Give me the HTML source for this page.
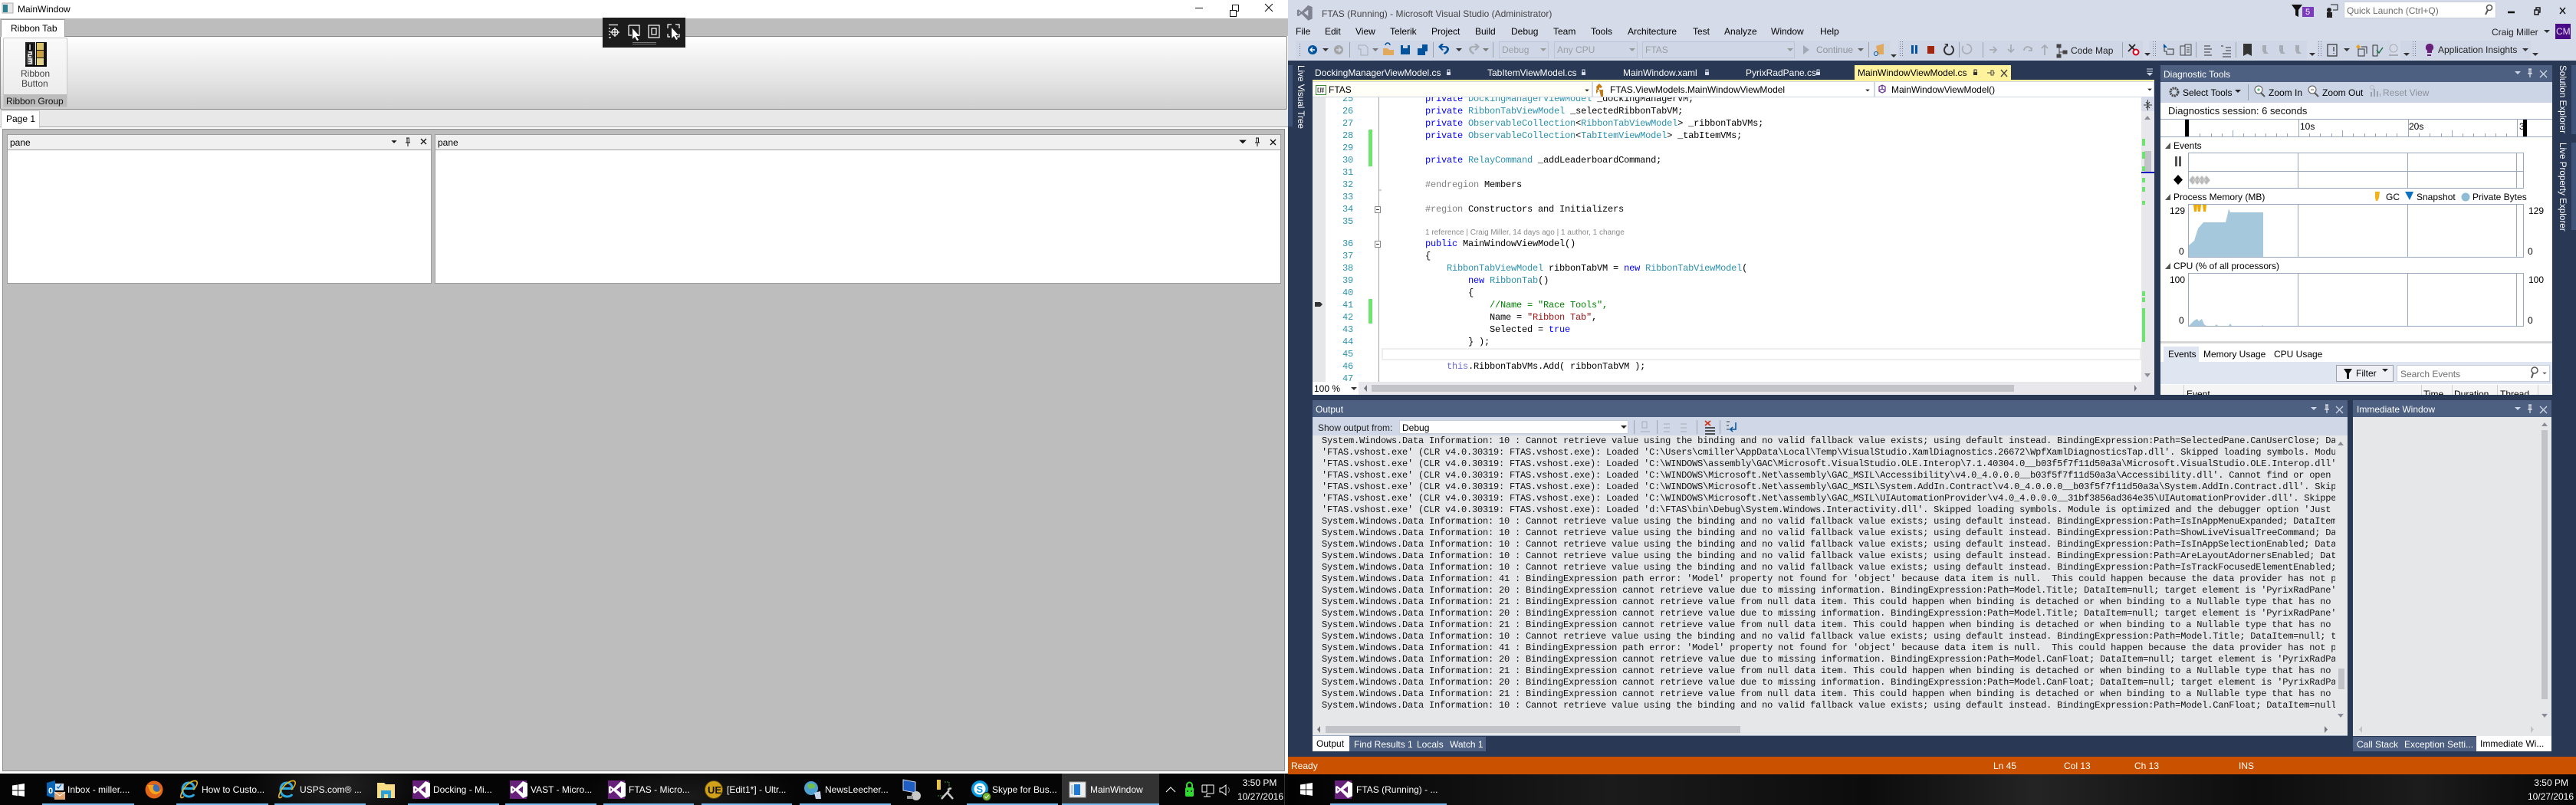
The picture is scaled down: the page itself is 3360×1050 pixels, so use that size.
<!DOCTYPE html>
<html><head><meta charset="utf-8"><title>MainWindow</title>
<style>
html,body{margin:0;padding:0;width:3360px;height:1050px;overflow:hidden;background:#000}
body{position:relative;font:12px/16px "Liberation Sans",sans-serif;color:#000}
.r{position:absolute}
.t{position:absolute;white-space:nowrap;line-height:16px;font-size:12px}
.w{color:#fff}.g{color:#a2a4a5}
.c{position:absolute;white-space:pre;font:12px/16px "Liberation Mono",monospace;letter-spacing:-.2px;left:0}
.n{position:absolute;left:1740px;width:25px;text-align:right;font:12px/16px "Liberation Mono",monospace;letter-spacing:-.2px;color:#2b91af}
.k{color:#00f}.y{color:#2b91af}.p{color:#808080}.s{color:#a31515}.m{color:#008000}.h{color:#6c6cd8}
.o{display:block;white-space:pre;font:12px/15px "Liberation Mono",monospace;letter-spacing:-.2px;height:15px;color:#111}
.u{position:absolute;top:1048px;height:2px;background:#76b9ed}
</style></head><body>

<!-- LEFT WINDOW -->
<div class="r" style="left:0;top:0;width:1680px;height:1009px;background:#fff"></div>
<div class="t" style="left:23px;top:4px">MainWindow</div>
<div class="r" style="left:0;top:24px;width:1680px;height:23px;background:#bdbdbd"></div>
<div class="r" style="left:0;top:47px;width:1679px;height:96px;background:linear-gradient(#fff,#f3f3f3 25%,#e2e2e2 65%,#cfcfcf);border:1px solid #8a8a8a;box-sizing:border-box;border-radius:2px"></div>
<div class="r" style="left:1px;top:25px;width:84px;height:23px;background:#fff;border:1px solid #9a9a9a;border-bottom:0;box-sizing:border-box"></div>
<div class="t" style="left:14px;top:29px">Ribbon Tab</div>
<div class="r" style="left:4px;top:49px;width:84px;height:91px;background:linear-gradient(#fafafa,#e9e9e9);border:1px solid #c8c8c8;box-sizing:border-box;border-radius:2px"></div>
<div class="r" style="left:5px;top:123px;width:82px;height:16px;background:#bcbcbc"></div>
<div class="t" style="left:27px;top:88px;color:#444">Ribbon</div>
<div class="t" style="left:28px;top:101px;color:#444">Button</div>
<div class="t" style="left:8px;top:124px;color:#111">Ribbon Group</div>
<div class="r" style="left:0;top:143px;width:1680px;height:23px;background:#e8e8e8;border-bottom:1px solid #a8a8a8;box-sizing:border-box"></div>
<div class="r" style="left:1px;top:144px;width:51px;height:23px;background:#fff;border:1px solid #c8c8c8;border-bottom:0;box-sizing:border-box"></div>
<div class="t" style="left:8px;top:147px">Page 1</div>
<div class="r" style="left:3px;top:168px;width:1673px;height:838px;background:#bdbdbd;border:1px solid #8c8c8c;border-width:1px 1px 1px 1px;box-sizing:border-box"></div>
<div class="r" style="left:9px;top:175px;width:554px;height:195px;background:#fff;border:1px solid #9b9b9b;box-sizing:border-box"></div>
<div class="r" style="left:10px;top:176px;width:552px;height:19px;background:#f0f0f0;border-bottom:1px solid #a4a4a4"></div>
<div class="t" style="left:13px;top:178px">pane</div>
<div class="r" style="left:567px;top:175px;width:1104px;height:195px;background:#fff;border:1px solid #9b9b9b;box-sizing:border-box"></div>
<div class="r" style="left:568px;top:176px;width:1102px;height:19px;background:#f0f0f0;border-bottom:1px solid #a4a4a4"></div>
<div class="t" style="left:571px;top:178px">pane</div>
<div class="r" style="left:786px;top:23px;width:108px;height:39px;background:#1c1c1c"></div>

<!-- VS WINDOW -->
<div class="r" style="left:1680px;top:0;width:1680px;height:987px;background:#293955"></div>
<div class="r" style="left:1680px;top:0;width:1680px;height:79px;background:#d6dbe9"></div>
<div class="t" style="left:1724px;top:10px;color:#444">FTAS (Running) - Microsoft Visual Studio (Administrator)</div>
<div class="t" style="left:1690px;top:33px">File</div><div class="t" style="left:1728px;top:33px">Edit</div><div class="t" style="left:1768px;top:33px">View</div><div class="t" style="left:1813px;top:33px">Telerik</div><div class="t" style="left:1867px;top:33px">Project</div><div class="t" style="left:1924px;top:33px">Build</div><div class="t" style="left:1971px;top:33px">Debug</div><div class="t" style="left:2026px;top:33px">Team</div><div class="t" style="left:2075px;top:33px">Tools</div><div class="t" style="left:2123px;top:33px">Architecture</div><div class="t" style="left:2208px;top:33px">Test</div><div class="t" style="left:2249px;top:33px">Analyze</div><div class="t" style="left:2310px;top:33px">Window</div><div class="t" style="left:2374px;top:33px">Help</div>

<div class="r" style="left:1690px;top:53px;width:775px;height:24px;background:#cfd6e5"></div>
<div class="r" style="left:2476px;top:53px;width:319px;height:24px;background:#cfd6e5"></div>
<div class="r" style="left:2803px;top:53px;width:206px;height:24px;background:#cfd6e5"></div>
<div class="r" style="left:3022px;top:53px;width:97px;height:24px;background:#cfd6e5"></div>
<div class="r" style="left:3131px;top:53px;width:170px;height:24px;background:#cfd6e5"></div>
<div class="r" style="left:1955px;top:54px;width:65px;height:22px;border:1px solid #bcc5d6;box-sizing:border-box"></div>
<div class="t g" style="left:1959px;top:57px;color:#9a9ea6">Debug</div>
<div class="r" style="left:2027px;top:54px;width:109px;height:22px;border:1px solid #bcc5d6;box-sizing:border-box"></div>
<div class="t g" style="left:2031px;top:57px;color:#9a9ea6">Any CPU</div>
<div class="r" style="left:2142px;top:54px;width:199px;height:22px;border:1px solid #bcc5d6;box-sizing:border-box"></div>
<div class="t g" style="left:2146px;top:57px;color:#9a9ea6">FTAS</div>
<div class="t g" style="left:2369px;top:57px;color:#8f939b">Continue</div>
<div class="t" style="left:2701px;top:58px;color:#222">Code Map</div>
<div class="t" style="left:3180px;top:57px;color:#222">Application Insights</div>

<div class="r" style="left:3003px;top:9px;width:15px;height:13px;background:#7b3bbd"></div>
<div class="t w" style="left:3007px;top:8px;font-size:11px">5</div>
<div class="r" style="left:3057px;top:2px;width:199px;height:22px;background:#fff;border:1px solid #c6cede;box-sizing:border-box"></div>
<div class="t" style="left:3061px;top:6px;color:#6d6d6d">Quick Launch (Ctrl+Q)</div>
<div class="t" style="left:3250px;top:34px;color:#222">Craig Miller</div>
<div class="r" style="left:3333px;top:31px;width:20px;height:20px;background:#4a0c86"></div>
<div class="t" style="left:3334px;top:33px;color:#e8dcf5;font-size:12px">CM</div>

<!-- left strip -->
<div class="r" style="left:1680px;top:85px;width:6px;height:80px;background:#3f5378"></div>
<div class="t w" style="left:1688px;top:85px;writing-mode:vertical-rl;font-size:11.7px">Live Visual Tree</div>

<!-- Document tabs -->
<div class="t w" style="left:1715px;top:87px">DockingManagerViewModel.cs</div>
<div class="t w" style="left:1940px;top:87px">TabItemViewModel.cs</div>
<div class="t w" style="left:2117px;top:87px">MainWindow.xaml</div>
<div class="t w" style="left:2277px;top:87px">PyrixRadPane.cs</div>
<div class="r" style="left:2419px;top:85px;width:204px;height:19px;background:#fff29d"></div>
<div class="t" style="left:2423px;top:87px">MainWindowViewModel.cs</div>
<div class="r" style="left:1712px;top:104px;width:1098px;height:2px;background:#fff29d"></div>

<!-- nav bar -->
<div class="r" style="left:1712px;top:106px;width:1098px;height:21px;background:#cfd6e5"></div>
<div class="r" style="left:1712px;top:107px;width:364px;height:19px;background:#fffff8"></div>
<div class="r" style="left:2078px;top:107px;width:366px;height:19px;background:#fff"></div>
<div class="r" style="left:2446px;top:107px;width:363px;height:19px;background:#fff"></div>
<div class="t" style="left:1733px;top:109px">FTAS</div>
<div class="t" style="left:2100px;top:109px">FTAS.ViewModels.MainWindowViewModel</div>
<div class="t" style="left:2467px;top:109px">MainWindowViewModel()</div>

<!-- editor -->
<div class="r" style="left:1712px;top:127px;width:1098px;height:371px;background:#fff"></div>
<div class="r" style="left:1712px;top:127px;width:17px;height:371px;background:#e6e7e8"></div>
<div class="r" style="left:1798px;top:127px;width:1px;height:371px;background:#a5a5a5"></div>
<div class="r" style="left:1785px;top:169px;width:5px;height:48px;background:#6fe36f"></div>
<div class="r" style="left:1785px;top:390px;width:5px;height:32px;background:#6fe36f"></div>
<div class="r" style="left:1802px;top:454px;width:991px;height:16px;background:#fff;border:2px solid #eeeeee;box-sizing:border-box"></div>

<div class="r" style="left:1740px;top:127px;width:30px;height:10px;overflow:hidden"><div class="n" style="left:0;top:-6px">25</div></div>
<div class="n" style="top:137px">26</div><div class="n" style="top:153px">27</div><div class="n" style="top:169px">28</div><div class="n" style="top:185px">29</div><div class="n" style="top:201px">30</div><div class="n" style="top:217px">31</div><div class="n" style="top:233px">32</div><div class="n" style="top:249px">33</div><div class="n" style="top:265px">34</div><div class="n" style="top:281px">35</div><div class="n" style="top:310px">36</div><div class="n" style="top:326px">37</div><div class="n" style="top:342px">38</div><div class="n" style="top:358px">39</div><div class="n" style="top:374px">40</div><div class="n" style="top:390px">41</div><div class="n" style="top:406px">42</div><div class="n" style="top:422px">43</div><div class="n" style="top:438px">44</div><div class="n" style="top:454px">45</div><div class="n" style="top:470px">46</div><div class="n" style="top:486px;height:12px;overflow:hidden">47</div>

<div class="r" style="left:1859px;top:127px;width:930px;height:371px;overflow:hidden">
<div class="c" style="top:-6px"><span class="k">private</span> <span class="y">DockingManagerViewModel</span> _dockingManagerVM;</div>
<div class="c" style="top:10px"><span class="k">private</span> <span class="y">RibbonTabViewModel</span> _selectedRibbonTabVM;</div>
<div class="c" style="top:26px"><span class="k">private</span> <span class="y">ObservableCollection</span>&lt;<span class="y">RibbonTabViewModel</span>&gt; _ribbonTabVMs;</div>
<div class="c" style="top:42px"><span class="k">private</span> <span class="y">ObservableCollection</span>&lt;<span class="y">TabItemViewModel</span>&gt; _tabItemVMs;</div>
<div class="c" style="top:74px"><span class="k">private</span> <span class="y">RelayCommand</span> _addLeaderboardCommand;</div>
<div class="c" style="top:106px"><span class="p">#endregion</span> Members</div>
<div class="c" style="top:138px"><span class="p">#region</span> Constructors and Initializers</div>
<div class="c" style="top:183px"><span class="k">public</span> MainWindowViewModel()</div>
<div class="c" style="top:199px">{</div>
<div class="c" style="top:215px">    <span class="y">RibbonTabViewModel</span> ribbonTabVM = <span class="k">new</span> <span class="y">RibbonTabViewModel</span>(</div>
<div class="c" style="top:231px">        <span class="k">new</span> <span class="y">RibbonTab</span>()</div>
<div class="c" style="top:247px">        {</div>
<div class="c" style="top:263px">            <span class="m">//Name = "Race Tools",</span></div>
<div class="c" style="top:279px">            Name = <span class="s">"Ribbon Tab"</span>,</div>
<div class="c" style="top:295px">            Selected = <span class="k">true</span></div>
<div class="c" style="top:311px">        } );</div>
<div class="c" style="top:343px">    <span class="h">this</span>.RibbonTabVMs.Add( ribbonTabVM );</div>
</div>
<div class="t" style="left:1859px;top:296px;font-size:10px;color:#8a8a8a">1 reference | Craig Miller, 14 days ago | 1 author, 1 change</div>

<!-- editor scrollbars -->
<div class="r" style="left:2793px;top:127px;width:17px;height:371px;background:#e8e8ec"></div>
<div class="r" style="left:2793px;top:127px;width:17px;height:18px;background:#d6dbe9"></div>
<div class="r" style="left:2797px;top:197px;width:9px;height:28px;background:#c2c3c9"></div>
<div class="r" style="left:2794px;top:181px;width:4px;height:9px;background:#6fe36f"></div>
<div class="r" style="left:2794px;top:198px;width:4px;height:9px;background:#6fe36f"></div>
<div class="r" style="left:2794px;top:217px;width:4px;height:6px;background:#6fe36f"></div>
<div class="r" style="left:2794px;top:232px;width:4px;height:6px;background:#6fe36f"></div>
<div class="r" style="left:2794px;top:244px;width:4px;height:6px;background:#6fe36f"></div>
<div class="r" style="left:2794px;top:262px;width:4px;height:5px;background:#6fe36f"></div>
<div class="r" style="left:2794px;top:380px;width:4px;height:6px;background:#6fe36f"></div>
<div class="r" style="left:2794px;top:388px;width:4px;height:6px;background:#6fe36f"></div>
<div class="r" style="left:2794px;top:402px;width:4px;height:44px;background:#6fe36f"></div>
<div class="r" style="left:2793px;top:224px;width:17px;height:2px;background:#0000c0"></div>
<div class="r" style="left:1712px;top:498px;width:1098px;height:17px;background:#e8e8ec"></div>
<div class="r" style="left:1712px;top:498px;width:60px;height:17px;background:#fff"></div>
<div class="t" style="left:1714px;top:499px">100 %</div>
<div class="r" style="left:1789px;top:502px;width:838px;height:9px;background:#c2c3c9"></div>

<!-- Diagnostic tools -->
<div class="r" style="left:2818px;top:85px;width:511px;height:430px;background:#fff"></div>
<div class="r" style="left:2818px;top:85px;width:511px;height:22px;background:#4d6082"></div>
<div class="t w" style="left:2822px;top:89px">Diagnostic Tools</div>
<div class="r" style="left:2818px;top:107px;width:511px;height:27px;background:#ccd5e5"></div>
<div class="t" style="left:2847px;top:113px">Select Tools</div>
<div class="t" style="left:2959px;top:113px">Zoom In</div>
<div class="t" style="left:3029px;top:113px">Zoom Out</div>
<div class="t" style="left:3108px;top:113px;color:#8d929c">Reset View</div>
<div class="t" style="left:2828px;top:137px;font-size:13px;color:#111">Diagnostics session: 6 seconds</div>
<div class="r" style="left:2818px;top:155px;width:511px;height:1px;background:#9aa8bd"></div>
<div class="r" style="left:2818px;top:178px;width:511px;height:1px;background:#9aa8bd"></div>
<div class="t" style="left:3000px;top:157px">10s</div>
<div class="t" style="left:3142px;top:157px">20s</div>
<div class="t" style="left:3286px;top:157px">3</div>
<div class="r" style="left:2850px;top:156px;width:5px;height:22px;background:#000"></div>
<div class="r" style="left:3291px;top:156px;width:5px;height:22px;background:#000"></div>
<div class="t" style="left:2835px;top:182px">Events</div>
<div class="r" style="left:2854px;top:199px;width:438px;height:47px;border:1px solid #9aa8bd;box-sizing:border-box"></div>
<div class="r" style="left:2854px;top:223px;width:438px;height:1px;background:#9aa8bd"></div>
<div class="t" style="left:2835px;top:249px">Process Memory (MB)</div>
<div class="t" style="left:3112px;top:249px">GC</div>
<div class="t" style="left:3152px;top:249px">Snapshot</div>
<div class="t" style="left:3225px;top:249px">Private Bytes</div>
<div class="r" style="left:2854px;top:266px;width:438px;height:70px;border:1px solid #9aa8bd;box-sizing:border-box"></div>
<div class="t" style="left:2830px;top:267px">129</div><div class="t" style="left:2842px;top:320px">0</div>
<div class="t" style="left:3298px;top:267px">129</div><div class="t" style="left:3297px;top:320px">0</div>
<div class="t" style="left:2835px;top:339px">CPU (% of all processors)</div>
<div class="r" style="left:2854px;top:356px;width:438px;height:70px;border:1px solid #9aa8bd;box-sizing:border-box"></div>
<div class="t" style="left:2830px;top:357px">100</div><div class="t" style="left:2842px;top:410px">0</div>
<div class="t" style="left:3298px;top:357px">100</div><div class="t" style="left:3297px;top:410px">0</div>
<div class="r" style="left:2818px;top:445px;width:511px;height:3px;background:#d6d6d6"></div>
<div class="r" style="left:2822px;top:452px;width:46px;height:20px;background:#e0e5f2"></div>
<div class="t" style="left:2828px;top:454px">Events</div>
<div class="t" style="left:2874px;top:454px">Memory Usage</div>
<div class="t" style="left:2966px;top:454px">CPU Usage</div>
<div class="r" style="left:2818px;top:472px;width:511px;height:29px;background:#e0e5f2"></div>
<div class="r" style="left:3047px;top:476px;width:75px;height:22px;background:#eef0f6;border:1px solid #9a9fa8;box-sizing:border-box"></div>
<div class="t" style="left:3073px;top:479px">Filter</div>
<div class="r" style="left:3126px;top:476px;width:200px;height:22px;background:#fff;border:1px solid #c6cede;box-sizing:border-box"></div>
<div class="t" style="left:3131px;top:480px;color:#6d6d6d">Search Events</div>
<div class="r" style="left:2818px;top:502px;width:511px;height:13px;background:#f5f5f5;overflow:hidden">
<div class="t" style="left:34px;top:4px">Event</div><div class="t" style="left:343px;top:4px">Time</div><div class="t" style="left:383px;top:4px">Duration</div><div class="t" style="left:443px;top:4px">Thread</div>
<div class="r" style="left:30px;top:0;width:1px;height:13px;background:#d0d0d0"></div><div class="r" style="left:340px;top:0;width:1px;height:13px;background:#d0d0d0"></div><div class="r" style="left:380px;top:0;width:1px;height:13px;background:#d0d0d0"></div><div class="r" style="left:439px;top:0;width:1px;height:13px;background:#d0d0d0"></div><div class="r" style="left:492px;top:0;width:1px;height:13px;background:#d0d0d0"></div>
</div>

<!-- right strip -->
<div class="r" style="left:3354px;top:85px;width:6px;height:90px;background:#3f5378"></div>
<div class="r" style="left:3354px;top:186px;width:6px;height:114px;background:#3f5378"></div>
<div class="t w" style="left:3334px;top:85px;writing-mode:vertical-rl;font-size:11.7px">Solution Explorer</div>
<div class="t w" style="left:3334px;top:186px;writing-mode:vertical-rl;font-size:11.7px">Live Property Explorer</div>

<!-- Output -->
<div class="r" style="left:1712px;top:522px;width:1350px;height:22px;background:#4d6082"></div>
<div class="t w" style="left:1716px;top:526px">Output</div>
<div class="r" style="left:1712px;top:544px;width:1350px;height:26px;background:#d0d7e6"></div>
<div class="t" style="left:1719px;top:550px;color:#222">Show output from:</div>
<div class="r" style="left:1825px;top:548px;width:299px;height:18px;background:#fff;border:1px solid #c6cede;box-sizing:border-box"></div>
<div class="t" style="left:1829px;top:550px">Debug</div>
<div class="r" style="left:1712px;top:568px;width:1350px;height:392px;background:#e6e7e8;border-bottom:1px solid #9aa8c4;box-sizing:border-box"></div>
<div class="r" style="left:1724px;top:568px;width:1322px;height:360px;overflow:hidden">
<span class="o">System.Windows.Data Information: 10 : Cannot retrieve value using the binding and no valid fallback value exists; using default instead. BindingExpression:Path=SelectedPane.CanUserClose; DataItem=null;</span>
<span class="o">'FTAS.vshost.exe' (CLR v4.0.30319: FTAS.vshost.exe): Loaded 'C:\Users\cmiller\AppData\Local\Temp\VisualStudio.XamlDiagnostics.26672\WpfXamlDiagnosticsTap.dll'. Skipped loading symbols. Module</span>
<span class="o">'FTAS.vshost.exe' (CLR v4.0.30319: FTAS.vshost.exe): Loaded 'C:\WINDOWS\assembly\GAC\Microsoft.VisualStudio.OLE.Interop\7.1.40304.0__b03f5f7f11d50a3a\Microsoft.VisualStudio.OLE.Interop.dll'.</span>
<span class="o">'FTAS.vshost.exe' (CLR v4.0.30319: FTAS.vshost.exe): Loaded 'C:\WINDOWS\Microsoft.Net\assembly\GAC_MSIL\Accessibility\v4.0_4.0.0.0__b03f5f7f11d50a3a\Accessibility.dll'. Cannot find or open the</span>
<span class="o">'FTAS.vshost.exe' (CLR v4.0.30319: FTAS.vshost.exe): Loaded 'C:\WINDOWS\Microsoft.Net\assembly\GAC_MSIL\System.AddIn.Contract\v4.0_4.0.0.0__b03f5f7f11d50a3a\System.AddIn.Contract.dll'. Skipped</span>
<span class="o">'FTAS.vshost.exe' (CLR v4.0.30319: FTAS.vshost.exe): Loaded 'C:\WINDOWS\Microsoft.Net\assembly\GAC_MSIL\UIAutomationProvider\v4.0_4.0.0.0__31bf3856ad364e35\UIAutomationProvider.dll'. Skipped</span>
<span class="o">'FTAS.vshost.exe' (CLR v4.0.30319: FTAS.vshost.exe): Loaded 'd:\FTAS\bin\Debug\System.Windows.Interactivity.dll'. Skipped loading symbols. Module is optimized and the debugger option 'Just My</span>
<span class="o">System.Windows.Data Information: 10 : Cannot retrieve value using the binding and no valid fallback value exists; using default instead. BindingExpression:Path=IsInAppMenuExpanded; DataItem=null;</span>
<span class="o">System.Windows.Data Information: 10 : Cannot retrieve value using the binding and no valid fallback value exists; using default instead. BindingExpression:Path=ShowLiveVisualTreeCommand; DataItem=</span>
<span class="o">System.Windows.Data Information: 10 : Cannot retrieve value using the binding and no valid fallback value exists; using default instead. BindingExpression:Path=IsInAppSelectionEnabled; DataItem=</span>
<span class="o">System.Windows.Data Information: 10 : Cannot retrieve value using the binding and no valid fallback value exists; using default instead. BindingExpression:Path=AreLayoutAdornersEnabled; DataItem=</span>
<span class="o">System.Windows.Data Information: 10 : Cannot retrieve value using the binding and no valid fallback value exists; using default instead. BindingExpression:Path=IsTrackFocusedElementEnabled; Data</span>
<span class="o">System.Windows.Data Information: 41 : BindingExpression path error: 'Model' property not found for 'object' because data item is null.  This could happen because the data provider has not produced</span>
<span class="o">System.Windows.Data Information: 20 : BindingExpression cannot retrieve value due to missing information. BindingExpression:Path=Model.Title; DataItem=null; target element is 'PyrixRadPane' (Name</span>
<span class="o">System.Windows.Data Information: 21 : BindingExpression cannot retrieve value from null data item. This could happen when binding is detached or when binding to a Nullable type that has no value</span>
<span class="o">System.Windows.Data Information: 20 : BindingExpression cannot retrieve value due to missing information. BindingExpression:Path=Model.Title; DataItem=null; target element is 'PyrixRadPane' (Name</span>
<span class="o">System.Windows.Data Information: 21 : BindingExpression cannot retrieve value from null data item. This could happen when binding is detached or when binding to a Nullable type that has no value</span>
<span class="o">System.Windows.Data Information: 10 : Cannot retrieve value using the binding and no valid fallback value exists; using default instead. BindingExpression:Path=Model.Title; DataItem=null; target</span>
<span class="o">System.Windows.Data Information: 41 : BindingExpression path error: 'Model' property not found for 'object' because data item is null.  This could happen because the data provider has not produced</span>
<span class="o">System.Windows.Data Information: 20 : BindingExpression cannot retrieve value due to missing information. BindingExpression:Path=Model.CanFloat; DataItem=null; target element is 'PyrixRadPane' (Na</span>
<span class="o">System.Windows.Data Information: 21 : BindingExpression cannot retrieve value from null data item. This could happen when binding is detached or when binding to a Nullable type that has no value</span>
<span class="o">System.Windows.Data Information: 20 : BindingExpression cannot retrieve value due to missing information. BindingExpression:Path=Model.CanFloat; DataItem=null; target element is 'PyrixRadPane' (Na</span>
<span class="o">System.Windows.Data Information: 21 : BindingExpression cannot retrieve value from null data item. This could happen when binding is detached or when binding to a Nullable type that has no value</span>
<span class="o">System.Windows.Data Information: 10 : Cannot retrieve value using the binding and no valid fallback value exists; using default instead. BindingExpression:Path=Model.CanFloat; DataItem=null; target</span>
</div>
<div class="r" style="left:3050px;top:872px;width:8px;height:27px;background:#c2c3c9"></div>
<div class="r" style="left:1729px;top:947px;width:541px;height:9px;background:#c2c3c9"></div>
<div class="r" style="left:1712px;top:961px;width:226px;height:19px;background:#4d6082"></div>
<div class="r" style="left:1712px;top:960px;width:48px;height:20px;background:#fff"></div>
<div class="t" style="left:1717px;top:962px">Output</div>
<div class="t w" style="left:1766px;top:963px">Find Results 1</div>
<div class="t w" style="left:1848px;top:963px">Locals</div>
<div class="t w" style="left:1891px;top:963px">Watch 1</div>

<!-- Immediate -->
<div class="r" style="left:3069px;top:522px;width:259px;height:22px;background:#4d6082"></div>
<div class="t w" style="left:3074px;top:526px">Immediate Window</div>
<div class="r" style="left:3069px;top:544px;width:259px;height:416px;background:#e6e7e8"></div>
<div class="r" style="left:3315px;top:561px;width:8px;height:351px;background:#c2c3c9"></div>
<div class="r" style="left:3069px;top:961px;width:259px;height:19px;background:#4d6082"></div>
<div class="t w" style="left:3074px;top:963px">Call Stack</div>
<div class="t w" style="left:3136px;top:963px">Exception Setti...</div>
<div class="r" style="left:3230px;top:960px;width:98px;height:20px;background:#fff"></div>
<div class="t" style="left:3235px;top:962px">Immediate Wi...</div>

<!-- Status bar -->
<div class="r" style="left:1680px;top:987px;width:1680px;height:23px;background:#ca5100"></div>
<div class="t w" style="left:1684px;top:991px">Ready</div>
<div class="t w" style="left:2600px;top:991px">Ln 45</div>
<div class="t w" style="left:2692px;top:991px">Col 13</div>
<div class="t w" style="left:2784px;top:991px">Ch 13</div>
<div class="t w" style="left:2920px;top:991px">INS</div>

<!-- Taskbars -->
<div class="r" style="left:0;top:1009px;width:1680px;height:41px;background:radial-gradient(ellipse 120px 60px at 440px 15px,#222,transparent),radial-gradient(ellipse 140px 50px at 900px 30px,#1a1a1a,transparent),#050505"></div>
<div class="r" style="left:1675px;top:1009px;width:1px;height:41px;background:#333"></div>
<div class="r" style="left:1680px;top:1010px;width:1680px;height:40px;background:linear-gradient(90deg,#020202,#1b1b1b 25%,#0c0c0c 45%,#242424 58%,#0d0d0d 75%,#1c1c1c 88%,#060606)"></div>
<div class="r" style="left:1385px;top:1009px;width:127px;height:41px;background:#333"></div>
<div class="t w" style="left:88px;top:1022px">Inbox - miller....</div>
<div class="t w" style="left:263px;top:1022px">How to Custo...</div>
<div class="t w" style="left:391px;top:1022px">USPS.com® ...</div>
<div class="t w" style="left:565px;top:1022px">Docking - Mi...</div>
<div class="t w" style="left:692px;top:1022px">VAST - Micro...</div>
<div class="t w" style="left:820px;top:1022px">FTAS - Micro...</div>
<div class="t w" style="left:948px;top:1022px">[Edit1*] - Ultr...</div>
<div class="t w" style="left:1076px;top:1022px">NewsLeecher...</div>
<div class="t w" style="left:1294px;top:1022px">Skype for Bus...</div>
<div class="t w" style="left:1422px;top:1022px">MainWindow</div>
<div class="t w" style="left:1608px;top:1013px;width:70px;text-align:center">3:50 PM</div>
<div class="t w" style="left:1606px;top:1031px;width:68px;text-align:right">10/27/2016</div>
<div class="t w" style="left:1769px;top:1022px">FTAS (Running) - ...</div>
<div class="t w" style="left:3280px;top:1013px;width:70px;text-align:right">3:50 PM</div>
<div class="t w" style="left:3287px;top:1031px;width:70px;text-align:right">10/27/2016</div>
<div class="u" style="left:55px;width:120px"></div><div class="u" style="left:230px;width:120px"></div><div class="u" style="left:358px;width:119px"></div><div class="u" style="left:532px;width:119px"></div><div class="u" style="left:659px;width:119px"></div><div class="u" style="left:787px;width:118px"></div><div class="u" style="left:915px;width:118px"></div><div class="u" style="left:1043px;width:119px"></div><div class="u" style="left:1261px;width:119px"></div><div class="u" style="left:1385px;width:127px"></div><div class="u" style="left:1735px;width:152px"></div>

<!-- ICON LAYER -->
<svg class="r" style="left:0;top:0" width="3360" height="1050" viewBox="0 0 3360 1050">
<defs>
<path id="vs" fill-rule="evenodd" d="M17 1L23 3.5V20.5L17 23L7.5 13.5L3 17L1 16V8L3 7L7.5 10.5ZM17 7.5L11 12L17 16.5ZM3.5 9.8V14.2L5.6 12Z"/>
<g id="tri"><path d="M-4-2H4L0 2Z"/></g>
<g id="e"><path d="M4 10.5H18C18 5 15 3 11 3C6 3 3 7 3 12C3 18 7 21 11.5 21C14.5 21 17 20 18 18" fill="none" stroke="#2ba9e0" stroke-width="3"/><path d="M5 21C0 25-1 21 4 12C10 2 20-2 22 2C23 5 20 9 17 12" fill="none" stroke="#e7b520" stroke-width="1.6"/></g>
<g id="vsi"><rect x="0" y="0" width="22" height="24" fill="#68217a"/><use href="#vs" fill="#fff"/></g>
<pattern id="grip" width="3" height="3" patternUnits="userSpaceOnUse"><rect width="1" height="1" fill="#6d7487"/></pattern>
</defs>

<!-- left window icon -->
<rect x="3" y="4" width="14" height="13" fill="#e8e8e8" stroke="#b0b0b0"/><rect x="4" y="6" width="6" height="10" fill="#2b7f8f"/>
<!-- window buttons -->
<path d="M1559 10.500H1569" stroke="#111"/><path d="M1604.500 13.500h8v8h-8zM1607.500 13V6.500h8v8h-3" fill="none" stroke="#111"/><path d="M1650 5L1660 15M1660 5L1650 15" stroke="#111" fill="none"/>
<!-- pane buttons -->
<use href="#tri" transform="translate(514 185) scale(.9)" fill="#111"/><path d="M530 180h4M531 180v6M533.500 180v6M529 186h6M532 186v5" stroke="#111" fill="none"/><path d="M549 181L556 188M556 181L549 188" stroke="#111" stroke-width="1.3"/>
<use href="#tri" transform="translate(1621 185) scale(1.2)" fill="#111"/><path d="M1638 180h4M1639 180v6M1641.500 180v6M1637 186h6M1640 186v5" stroke="#111" fill="none"/><path d="M1657 182L1664 189M1664 182L1657 189" stroke="#111" stroke-width="1.4"/>

<!-- ribbon button icon -->
<rect x="33" y="55" width="13" height="32" fill="#222"/><rect x="47" y="55" width="14" height="32" fill="#111"/><rect x="33" y="85" width="28" height="2" fill="#000"/>
<rect x="35" y="57" width="8" height="9" fill="#111"/><rect x="35" y="66" width="8" height="9" fill="#333"/><rect x="35" y="75" width="8" height="9" fill="#555"/>
<path d="M39 58V65M39 68H37M37 68h4v3h-4v3h4M37 77h4v6h-4M37 80h4" stroke="#fff" stroke-width="1.4" fill="none"/>
<rect x="48" y="56" width="9" height="9" fill="#d9c26a"/><rect x="48" y="66" width="9" height="9" fill="#c9a040"/><rect x="48" y="76" width="9" height="9" fill="#e3d28a"/>

<!-- overlay toolbar icons -->
<g fill="none" stroke="#fff" stroke-width="1.200">
<path d="M794 32.500h12M794 37h2M794 41h2M794 45h2M794 49h3"/><circle cx="802" cy="42" r="4"/><path d="M802 36v12M796 42h12"/>
<path d="M820 33h14v13h-4M824 46h-4V33"/><path d="M825 37v14l3-3 3 5 2-1-3-5h4z" fill="#fff" stroke="none"/>
<rect x="846" y="33" width="14" height="16"/><rect x="850" y="37" width="6" height="8"/>
<path d="M871 37v-5h5M881 32h5v5M871 44v4h3M886 44v4h-3"/><path d="M876 36v14l3-3 3 5 2-1-3-5h4z" fill="#fff" stroke="none"/>
</g>
<path d="M825 55.500h31M825 57.500h31" stroke="#777"/>

<!-- VS logo -->
<use href="#vs" transform="translate(1691 6) scale(.9)" fill="#7e838f"/>

<!-- toolbar grips -->
<rect x="1694" y="56" width="4" height="18" fill="url(#grip)"/><rect x="2478" y="54" width="6" height="20" fill="url(#grip)"/><rect x="2808" y="54" width="6" height="20" fill="url(#grip)"/><rect x="3024" y="54" width="6" height="20" fill="url(#grip)"/><rect x="3147" y="54" width="6" height="20" fill="url(#grip)"/>

<!-- toolbar icons left -->
<circle cx="1712" cy="65" r="6" fill="#00539c"/><path d="M1715 65h-5M1712 62l-3 3 3 3" stroke="#fff" stroke-width="1.400" fill="none"/>
<use href="#tri" transform="translate(1729 65)" fill="#333"/>
<circle cx="1746" cy="65" r="6" fill="#a2a4a5"/><path d="M1743 65h5M1746 62l3 3-3 3" stroke="#d6dbe9" stroke-width="1.400" fill="none"/>
<path d="M1760.500 55V75M1869.500 55V75M1947.500 55V75M2437.500 55V75M2555.500 55V75M2586.500 55V75M2768.500 55V75M2864.500 55V75M2916.500 55V75" stroke="#9aa1af"/>
<path d="M1772 59h9l3 3v10h-9v-8h-3z" fill="none" stroke="#a9adb5"/><use href="#tri" transform="translate(1794 65)" fill="#777"/>
<path d="M1804 63h6l2 2h6v7h-14z" fill="#e0a95c"/><path d="M1807 59a3 3 0 0 1 6 0" fill="none" stroke="#00539c" stroke-width="1.500"/>
<path d="M1827 59h12v12h-12z" fill="#00539c"/><rect x="1830" y="59" width="6" height="4" fill="#cfd6e5"/>
<path d="M1849 63h10v9h-10zM1855 58h7v9h-3v-4h-4z" fill="#00539c"/>
<path d="M1882 60l-2 3h4c3 0 5 2 5 4 0 3-3 6-6 7l-1-2c2-1 4-3 4-5 0-1-1-2-3-2h-4l3 3-2 1-5-5 4-4z" fill="#00539c" transform="translate(1 -3)"/>
<use href="#tri" transform="translate(1903 65)" fill="#333"/>
<path d="M1923 57l2 3h-4c-3 0-5 2-5 4 0 3 3 6 6 7l1-2c-2-1-4-3-4-5 0-1 1-2 3-2h4l-3 3 2 1 5-5-4-4z" fill="#a8acb4"/>
<use href="#tri" transform="translate(1938 65)" fill="#777"/>
<use href="#tri" transform="translate(2013 65)" fill="#999"/><use href="#tri" transform="translate(2129 65)" fill="#999"/><use href="#tri" transform="translate(2335 65)" fill="#999"/>
<path d="M2352 59v12l8-6z" fill="#a2a8b4"/><use href="#tri" transform="translate(2427 65)" fill="#666"/>
<path d="M2447 60l10-3v14h-8z" fill="#e0a95c"/><circle cx="2447" cy="70" r="2.500" fill="none" stroke="#00539c"/>
<use href="#tri" transform="translate(2470 73)" fill="#333"/>
<rect x="2493" y="59" width="3" height="11" fill="#00539c"/><rect x="2498" y="59" width="3" height="11" fill="#00539c"/>
<rect x="2514" y="60" width="9" height="10" fill="#a1260d"/>
<path d="M2545 60a6 6 0 1 1-6 0" fill="none" stroke="#333" stroke-width="2"/><path d="M2536 57h5v4z" fill="#333"/>
<path d="M2565 58a6 6 0 1 1-4 2" fill="none" stroke="#a8acb4" stroke-width="1.600"/>
<path d="M2595 65h9M2600 61l4 4-4 4M2623 58v9M2619 64l4 4 4-4M2640 66a5 5 0 0 1 10 0M2650 62v4h-4M2667 72v-12M2663 63l4-4 4 4" fill="none" stroke="#a8acb4" stroke-width="1.800"/>
<path d="M2683 58h5v4h-5zM2691 66h5v4h-5zM2683 71h5v4h-5zM2686 62v9M2686 68h5" fill="#444" stroke="#444"/>
<path d="M2777 58l9 9M2785 58l-9 9" stroke="#222" stroke-width="1.800"/><circle cx="2786" cy="68" r="3.500" fill="#fff" stroke="#d0021b" stroke-width="2"/>
<use href="#tri" transform="translate(2801 71)" fill="#333"/>
<path d="M2823 58v9h3v4h9v-7h-8" fill="none" stroke="#333"/><path d="M2822 57l5 5h-5z" fill="#00539c"/>
<path d="M2844 60h6v12h-6zM2850 58h8v14h-8zM2852 62h4M2852 65h4M2852 68h4" fill="none" stroke="#444"/>
<path d="M2875 60h8M2875 64h10M2875 68h8M2875 72h10M2897 60h3M2903 62h7M2903 66h7M2899 70h11M2899 74h11" stroke="#333"/>
<path d="M2926 57h11v16l-5.500-3-5.500 3z" fill="#333"/>
<path d="M2951 59h5v8l3 3h-6l-2-4zM2973 59h5v8l3 3h-6l-2-4zM2994 59h5v8l3 3h-6l-2-4z" fill="#a8acb4"/>
<use href="#tri" transform="translate(3016 71)" fill="#333"/>
<path d="M3039 58h9v15h-12V58zM3044 61v6M3044 69v1" fill="none" stroke="#333" stroke-width="1.200"/><use href="#tri" transform="translate(3061 65)" fill="#333"/>
<path d="M3076 58l3 3-3 3-3-3z" fill="#e8a020"/><path d="M3076 64h8v9h-8zM3080 61h7v9" fill="none" stroke="#333"/>
<path d="M3095 59h6v14h-6z" fill="none" stroke="#333"/><path d="M3100 65l3 4 5-7" stroke="#1e7145" stroke-width="1.500" fill="none"/>
<circle cx="3122" cy="63" r="5" fill="none" stroke="#a8acb4"/><path d="M3116 72h12" stroke="#a8acb4" stroke-width="2"/>
<use href="#tri" transform="translate(3139 71)" fill="#333"/>
<path d="M3168 57a5 5 0 0 1 4 9v3h-6v-3a5 5 0 0 1 2-9z" fill="#68217a"/><path d="M3166 71h5v2h-5z" fill="#68217a"/>
<use href="#tri" transform="translate(3294 65)" fill="#333"/><use href="#tri" transform="translate(3307 71)" fill="#333"/>

<!-- title right icons -->
<path d="M2989 6h14l-5 7v9l-4-2v-7z" fill="#111"/>
<path d="M3035 16h7v7h-7z" fill="#222"/><circle cx="3038" cy="13" r="3" fill="#222"/><path d="M3040 6h9v7h-6" fill="none" stroke="#222"/>
<circle cx="3247" cy="10" r="3.500" fill="none" stroke="#555" stroke-width="1.500"/><path d="M3245 13l-3 6" stroke="#555" stroke-width="2"/>
<path d="M3271 16h9" stroke="#111" stroke-width="2.500"/><path d="M3306 13h5v6h-5zM3308 13v-3h5v6h-2" fill="none" stroke="#111" stroke-width="1.400"/><path d="M3339 10l7 8M3346 10l-7 8" stroke="#111" stroke-width="1.400"/>
<use href="#tri" transform="translate(3322 41)" fill="#333"/>

<!-- tab glyphs -->
<g fill="#d6dbe9"><rect x="1887" y="94" width="5" height="4"/><rect x="2063" y="94" width="5" height="4"/><rect x="2224" y="94" width="5" height="4"/><rect x="2369" y="94" width="5" height="4"/></g>
<g fill="none" stroke="#d6dbe9"><path d="M1888 94v-3h3v3M2064 94v-3h3v3M2225 94v-3h3v3M2370 94v-3h3v3"/></g>
<rect x="2574" y="94" width="5" height="4" fill="#333"/><path d="M2575 94v-3h3v3" fill="none" stroke="#333"/>
<path d="M2592 95h5M2597 92v6h3v-6zM2600 95h2" fill="none" stroke="#444"/><path d="M2610 91l8 9M2618 91l-8 9" stroke="#444" stroke-width="1.400"/>
<path d="M2800 90h8M2800 93h8" stroke="#cfd6e5"/><use href="#tri" transform="translate(2804 97)" fill="#cfd6e5"/>

<!-- nav bar icons -->
<rect x="1716.500" y="111.500" width="13" height="12" fill="#fff" stroke="#388a34"/>
<path d="M1721 115h-2v5h2M1723 114l-1 7M1726 114l-1 7M1722 116h5M1722 119h5" stroke="#222" stroke-width=".8" fill="none"/>
<path d="M2082 113l4-4 4 4-2 2-2-1v3h-3zM2086 117h5v9h-3zM2082 116l3 3-3 3z" fill="#c27d1a"/>
<path d="M2455 111l4 2v6l-4 2-4-2v-6zM2455 111v5l4 2M2455 116l-4 2" fill="none" stroke="#652d90" stroke-width="1.200"/>
<use href="#tri" transform="translate(2070 118) scale(.7)" fill="#222"/><use href="#tri" transform="translate(2436 118) scale(.7)" fill="#222"/><use href="#tri" transform="translate(2804 117) scale(.7)" fill="#222"/>

<!-- editor glyphs -->
<rect x="1793.500" y="269.500" width="7" height="8" fill="#fff" stroke="#888"/><path d="M1795 273.500h4" stroke="#333"/>
<rect x="1793.500" y="314.500" width="7" height="8" fill="#fff" stroke="#888"/><path d="M1795 318.500h4" stroke="#333"/>
<path d="M1798 248h4" stroke="#a5a5a5"/>
<path d="M1715 394h7l3 3-3 3h-7z" fill="#333"/>
<path d="M2801.500 130v6M2799 133l2.500 3 2.500-3M2796 137h11M2801.500 144v-5M2799 141l2.500-3 2.500 3" fill="none" stroke="#333"/>
<path d="M2797 156l4-5 4 5z" fill="#8a8d96"/><path d="M2797 487l4 5 4-5z" fill="#8a8d96"/>
<path d="M2784 502v9l3-4.500z" fill="#757680"/><path d="M1783 502v9l-4-4.500z" fill="#757680"/>
<use href="#tri" transform="translate(1766 507)" fill="#333"/>

<!-- diagnostic header buttons -->
<use href="#tri" transform="translate(3284 95)" fill="#cfd6e5"/><path d="M3298 90h4M3299 90v6M3301 90v6M3297 96h6M3300 96v5" stroke="#fff" fill="none"/><path d="M3313 92l9 9M3322 92l-9 9" stroke="#cfd6e5" stroke-width="1.300"/>
<!-- diagnostic toolbar -->
<circle cx="2836" cy="120" r="5" fill="none" stroke="#444" stroke-width="3" stroke-dasharray="2 1"/>
<use href="#tri" transform="translate(2919 119)" fill="#222"/><path d="M2932.500 110V131" stroke="#9aa1af"/>
<circle cx="2946" cy="117" r="5" fill="#fff" stroke="#555"/><path d="M2949 121l5 5" stroke="#555" stroke-width="2"/><path d="M2944 117h4M2946 115v4" stroke="#2a6"/>
<circle cx="3016" cy="117" r="5" fill="#fff" stroke="#555"/><path d="M3019 121l5 5" stroke="#555" stroke-width="2"/><path d="M3014 117h4" stroke="#555"/>
<path d="M3092 126h2v-6h-2zM3096 126h2v-10h-2zM3100 126h2v-7h-2zM3104 126h1v-4h-1z" fill="#9aa1af"/><circle cx="3094" cy="114" r="2.500" fill="none" stroke="#b5b9c2"/>

<!-- ruler ticks -->
<path d="M2998.500 156V178M3141.500 156V178M3283.500 156V178" stroke="#9aa8bd"/>
<path d="M2869.500 174v4M2884.500 174v4M2898.500 174v4M2912.500 170v8M2926.500 174v4M2941.500 174v4M2955.500 174v4M2969.500 174v4M2983.500 174v4M3012.500 174v4M3026.500 174v4M3041.500 174v4M3055.500 170v8M3069.500 174v4M3084.500 174v4M3098.500 174v4M3112.500 174v4M3126.500 174v4M3155.500 174v4M3169.500 174v4M3184.500 174v4M3198.500 170v8M3212.500 174v4M3226.500 174v4M3241.500 174v4M3255.500 174v4M3269.500 174v4" stroke="#9aa8bd"/>
<path d="M2997.500 200V245M3140.500 200V245M3282.500 200V245M2997.500 267V335M3140.500 267V335M3282.500 267V335M2997.500 357V425M3140.500 357V425M3282.500 357V425" stroke="#9aa8bd"/>
<!-- triangles -->
<path d="M2831 186v8h-7zM2831 253v8h-7zM2831 343v8h-7z" fill="#555"/>
<rect x="2837" y="204" width="3" height="13" fill="#555"/><rect x="2842" y="204" width="3" height="13" fill="#555"/>
<path d="M2841 228l6 6.500-6 6.500-6-6.500z" fill="#000"/>
<path d="M2860 229l-5 6 5 6 5-6zM2866 229l-5 6 5 6 5-6zM2872 229l-5 6 5 6 5-6zM2878 229l-5 6 5 6 5-6z" fill="#b9b9b9" stroke="#e4e4e4" stroke-width=".6"/>
<!-- legend -->
<path d="M3101 250h6l-1 8-2 4h-2l-1-4z" fill="#f2b21a" transform="translate(-3 0)"/>
<path d="M3137 250h11l-5 11z" fill="#0e70c0"/>
<circle cx="3216" cy="257" r="5.500" fill="#8fbcd4"/>
<!-- memory chart -->
<path d="M2855 335V320L2862 314L2867 298L2874 290H2903L2906 278L2907 272L2909 277H2952V335Z" fill="#a6c8dd"/>
<path d="M2861 267h5l-1 9h-3zM2866 267h5l-1 9h-3zM2873 267h5l-1 9h-3z" fill="#f2a900"/>
<!-- cpu chart -->
<path d="M2855 425L2860 420L2862 418L2866 416L2868 419L2872 416L2875 423L2878 425H2889L2891 423L2893 425H2907L2909 422L2911 425H2950L2952 424V425Z" fill="#a6c8dd"/>
<!-- filter -->
<path d="M3057 481h11l-4 6v7h-3v-7z" fill="#111"/><use href="#tri" transform="translate(3111 483)" fill="#222"/>
<circle cx="3306" cy="483" r="4" fill="none" stroke="#555" stroke-width="1.500"/><path d="M3304 487l-2 6" stroke="#555" stroke-width="2"/><use href="#tri" transform="translate(3319 487) scale(.7)" fill="#666"/>

<!-- output panel -->
<use href="#tri" transform="translate(3018 533)" fill="#cfd6e5"/><path d="M3033 528h4M3034 528v6M3036 528v6M3032 534h6M3035 534v5" stroke="#fff" fill="none"/><path d="M3047 530l9 9M3056 530l-9 9" stroke="#cfd6e5" stroke-width="1.300"/>
<use href="#tri" transform="translate(3284 533)" fill="#cfd6e5"/><path d="M3298 528h4M3299 528v6M3301 528v6M3297 534h6M3300 534v5" stroke="#fff" fill="none"/><path d="M3313 530l9 9M3322 530l-9 9" stroke="#cfd6e5" stroke-width="1.300"/>
<use href="#tri" transform="translate(2118 557)" fill="#222"/>
<path d="M2131.500 548V566M2161.500 548V566M2213.500 548V566M2243.500 548V566" stroke="#9aa1af"/>
<path d="M2142 550h6v8h-6zM2140 563h12M2170 553h8M2170 558h8M2170 563h8M2192 553h8M2192 558h8M2192 563h8" stroke="#a8acb4" fill="none"/>
<path d="M2224 549l7 6M2231 549l-7 6" stroke="#c8321a" stroke-width="1.800"/><path d="M2224 558h13M2224 562h13M2224 566h13" stroke="#222" stroke-width="1.500"/>
<path d="M2252 550h4M2252 555h3M2252 560h4" stroke="#333"/><path d="M2264 551v9h-6M2260 557l-3 3 3 3" fill="none" stroke="#00539c" stroke-width="1.500"/>
<path d="M3049 581l4-5 4 5z" fill="#8a8d96"/>
<path d="M3049 931l4 5 4-5z" fill="#8a8d96"/><path d="M1722 947v9l-4-4.500z" fill="#757680"/><path d="M3032 947v9l4-4.500z" fill="#757680"/>
<!-- immediate -->
<path d="M3315 556l4-5 4 5z" fill="#8a8d96"/><path d="M3315 931l4 5 4-5z" fill="#8a8d96"/><path d="M3081 947v9l-4-4.500zM3301 947v9l4-4.500z" fill="#c2c3c9"/>

<!-- Windows logos -->
<g fill="#fff"><path d="M16 1024.500l7-1v7h-7zM24 1023.300l8-1.300v8.500h-8zM16 1031.500h7v6.500l-7-1zM24 1031.500h8v7.500l-8-1.300z"/></g>
<g fill="#fff"><path d="M1696 1023.500l7-1v7h-7zM1704 1022.300l8-1.300v8.500h-8zM1696 1030.500h7v6.500l-7-1zM1704 1030.500h8v7.500l-8-1.300z"/></g>

<!-- Outlook -->
<path d="M61 1021l11-3v23l-11-3z" fill="#0a64b4"/><rect x="72" y="1022" width="11" height="9" fill="#cfe4f7"/><path d="M74 1026l2 2 4-5" stroke="#0a64b4" fill="none" stroke-width="1.300"/><text x="63" y="1035" font-size="11" font-family="Liberation Sans,sans-serif" fill="#fff" font-weight="bold">0</text><rect x="71" y="1033" width="14" height="10" fill="#e2a46c"/><path d="M71 1033l7 5 7-5" fill="none" stroke="#fff"/>
<!-- Firefox -->
<circle cx="201" cy="1030" r="11.500" fill="#e0661b"/><circle cx="202" cy="1029" r="6" fill="#3b6fb4"/><path d="M192 1024c3 4 2 9 9 12 5 1 9-3 10-7-2 3-6 5-9 3-3-2-3-6-1-8-3 0-6 0-9 0z" fill="#f4a41d"/>
<!-- IE -->
<use href="#e" transform="translate(235 1018)"/><use href="#e" transform="translate(363 1018)"/>
<!-- Folder -->
<path d="M492 1021h9l2 2h12v18h-23z" fill="#f7dc85"/><rect x="497" y="1031" width="13" height="10" fill="#2ba0d8"/><rect x="501" y="1036" width="5" height="5" fill="#f7dc85"/>
<!-- VS icons -->
<use href="#vsi" transform="translate(538 1018)"/><use href="#vsi" transform="translate(665 1018)"/><use href="#vsi" transform="translate(793 1018)"/><use href="#vsi" transform="translate(1741 1018)"/>
<!-- UE -->
<circle cx="931" cy="1030" r="11.500" fill="#d2a11a" stroke="#5c4a10"/><text x="923" y="1035" font-size="13" font-weight="bold" font-family="Liberation Sans,sans-serif" fill="#111">UE</text>
<!-- NewsLeecher -->
<circle cx="1058" cy="1028" r="9" fill="#4e9fd0"/><path d="M1053 1024c3-3 7-3 10 0 1 3-1 5-4 4-2 2-5 1-6-4z" fill="#6fbf4a"/><path d="M1062 1034l8-2 1 10-7 0z" fill="#c8d4e8"/>
<!-- App icons -->
<path d="M1178 1017l16 3v14l-16-3z" fill="#1f5fc4" stroke="#cfd8e8"/><circle cx="1195" cy="1038" r="6" fill="#c8c8c8"/><path d="M1183 1038h8v4h-8z" fill="#999"/>
<rect x="1222" y="1017" width="5" height="13" fill="#e8c04a"/><path d="M1232 1020h6v10M1223 1038h8" fill="none" stroke="#3a8a3a" stroke-dasharray="2 1"/><path d="M1228 1042l10-11M1243 1042l-8-9M1236 1030l5-2" stroke="#c8c8c8" stroke-width="2.500"/>
<!-- Skype -->
<circle cx="1278" cy="1029" r="11" fill="#0a9ae0"/><circle cx="1278" cy="1029" r="7.500" fill="#fff"/><text x="1273.500" y="1034" font-size="13" font-weight="bold" font-family="Liberation Sans,sans-serif" fill="#0a9ae0">S</text><circle cx="1287" cy="1039" r="5.500" fill="#6fb52c" stroke="#222"/><path d="M1284.500 1039l2 2 3-4" stroke="#fff" fill="none"/>
<!-- MainWindow icon -->
<rect x="1395" y="1020" width="21" height="20" fill="#eee" stroke="#aaa"/><rect x="1401" y="1023" width="8" height="14" fill="#1e7ad6"/><rect x="1397" y="1024" width="3" height="12" fill="#bcd"/>
<!-- tray -->
<path d="M1521 1033l6-6 6 6" stroke="#fff" fill="none"/>
<rect x="1546" y="1027" width="11" height="12" rx="2" fill="#2fdc2f"/><path d="M1548 1027v-3a3.500 3.500 0 0 1 7 0v3" fill="none" stroke="#2fdc2f" stroke-width="2"/><circle cx="1549" cy="1032" r="1" fill="#111"/><circle cx="1554" cy="1032" r="1" fill="#111"/>
<path d="M1568 1024h15v11h-9M1568 1024v9h6v-9M1574 1035v4M1570 1039h9" stroke="#fff" fill="none"/>
<path d="M1591 1028h3l5-4v13l-5-4h-3z" fill="none" stroke="#fff"/><path d="M1602 1027a5 5 0 0 1 0 7" stroke="#888" fill="none"/>
</svg>
</body></html>
